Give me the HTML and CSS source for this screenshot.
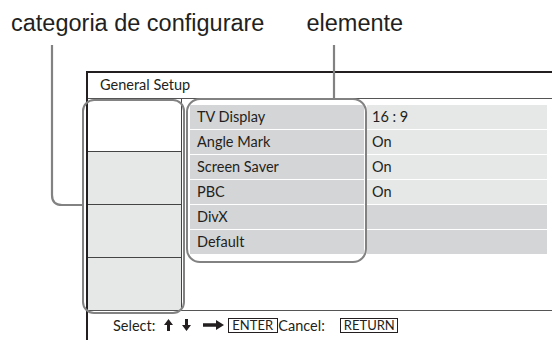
FILE: index.html
```html
<!DOCTYPE html>
<html lang="ro">
<head>
    <meta charset="UTF-8">
    <meta name="viewport" content="width=device-width, initial-scale=1.0">
    <title>General Setup</title>
    <link rel="stylesheet" href="styles.css">
</head>
<body>
    <div class="labels">
        <span class="label label-cat">categoria de configurare</span>
        <span class="label label-items">elemente</span>
    </div>

    <div class="screen">
        <div class="screen-title">General Setup</div>
        <div class="screen-body">
            <div class="cats">
                <div class="cat cat-active"></div>
                <div class="cat"></div>
                <div class="cat"></div>
                <div class="cat"></div>
            </div>
            <div class="items">
                <div class="row"><span class="name">TV Display</span><span class="value">16 : 9</span></div>
                <div class="row"><span class="name">Angle Mark</span><span class="value">On</span></div>
                <div class="row"><span class="name">Screen Saver</span><span class="value">On</span></div>
                <div class="row"><span class="name">PBC</span><span class="value">On</span></div>
                <div class="row row-dark"><span class="name">DivX</span><span class="value"></span></div>
                <div class="row row-dark"><span class="name">Default</span><span class="value"></span></div>
            </div>
        </div>
        <div class="screen-foot">
            <span class="foot-text">Select:</span>
            <svg class="arrow arrow-v" viewBox="0 0 9 12"><path d="M4.5 0 L9 6 L6 6 L6 12 L3 12 L3 6 L0 6 Z"/></svg>
            <svg class="arrow arrow-v" viewBox="0 0 9 12"><path d="M4.5 12 L9 6 L6 6 L6 0 L3 0 L3 6 L0 6 Z"/></svg>
            <svg class="arrow arrow-r" viewBox="0 0 21 10"><path d="M21 5 L13 0 L13 3.2 L0 3.2 L0 6.8 L13 6.8 L13 10 Z"/></svg>
            <span class="key key-enter">ENTER</span>
            <span class="foot-text">Cancel:</span>
            <span class="key key-return">RETURN</span>
        </div>
    </div>

    <!-- callouts drawn over the screen -->
    <div class="hl hl-cats"></div>
    <div class="hl hl-items"></div>
    <svg class="leaders" width="552" height="340">
        <path d="M52 45 V195 Q52 205 62 205 H83"/>
        <path d="M334 45 V99"/>
    </svg>
</body>
</html>
```

FILE: styles.css
```css
body {
    margin: 0;
    padding: 0;
    width: 552px;
    height: 340px;
    overflow: hidden;
    position: relative;
    background-color: #fff;
    color: #231f20;
    font-family: Lato, "Open Sans", sans-serif;
}

.labels {
    display: flex;
    height: 44px;
    padding-top: 10px;
    box-sizing: border-box;
    font-family: "Liberation Sans", Arial, sans-serif;
    font-size: 23.5px;
    line-height: 26px;
    color: #231f20;
}

.label-cat {
    margin-left: 11px;
}

.label-items {
    margin-left: 42px;
}

.screen {
    margin-top: 27px;
    margin-left: 86px;
    border-top: 2px solid #231f20;
    border-left: 2px solid #231f20;
    height: 280px;
}

.screen-title {
    height: 25px;
    padding-left: 12px;
    font-size: 14.5px;
    line-height: 24px;
    border-bottom: 1.5px solid #555;
}

.screen-body {
    display: flex;
    height: 211px;
}

.cats {
    width: 93px;
    display: flex;
    flex-direction: column;
    border-right: 1px solid #444;
}

.cat {
    flex: 1;
    background-color: #e6e7e7;
    border-top: 1px solid #444;
}

.cat-active {
    background-color: #fff;
    border-top: none;
}

.items {
    margin-left: 8px;
    padding-top: 6px;
    display: flex;
    flex-direction: column;
    gap: 1px;
}

.row {
    display: flex;
    height: 24px;
    font-size: 14.5px;
    line-height: 24px;
}

.name {
    width: 167px;
    padding-left: 7px;
    margin-right: 3px;
    background-color: #d4d5d6;
}

.value {
    width: 175px;
    padding-left: 5px;
    background-color: #e6e7e7;
}

.row-dark .value {
    background-color: #d4d5d6;
}

.screen-foot {
    display: flex;
    align-items: center;
    height: 28px;
    padding-left: 25px;
    border-top: 1.5px solid #555;
    font-size: 14.5px;
}

.foot-text {
    margin-right: 9px;
}

.arrow {
    fill: #231f20;
}

.arrow-v {
    width: 9px;
    height: 12px;
    margin-right: 9px;
}

.arrow-r {
    width: 21px;
    height: 10px;
    margin-left: 3px;
    margin-right: 4px;
}

.key {
    border: 1px solid #231f20;
    height: 15px;
    line-height: 13px;
    font-size: 13px;
    padding-left: 3px;
    box-sizing: border-box;
}

.key-enter {
    width: 50px;
}

.key-return {
    width: 58px;
    margin-left: 6px;
}

.hl {
    position: absolute;
    border: 2.5px solid #828282;
    box-sizing: border-box;
}

.hl-cats {
    left: 82px;
    top: 99px;
    width: 103px;
    height: 215px;
    border-radius: 12px;
}

.hl-items {
    left: 186px;
    top: 98px;
    width: 181px;
    height: 165px;
    border-radius: 14px;
}

.leaders {
    position: absolute;
    left: 0;
    top: 0;
    fill: none;
    stroke: #828282;
    stroke-width: 2.2;
}
```
